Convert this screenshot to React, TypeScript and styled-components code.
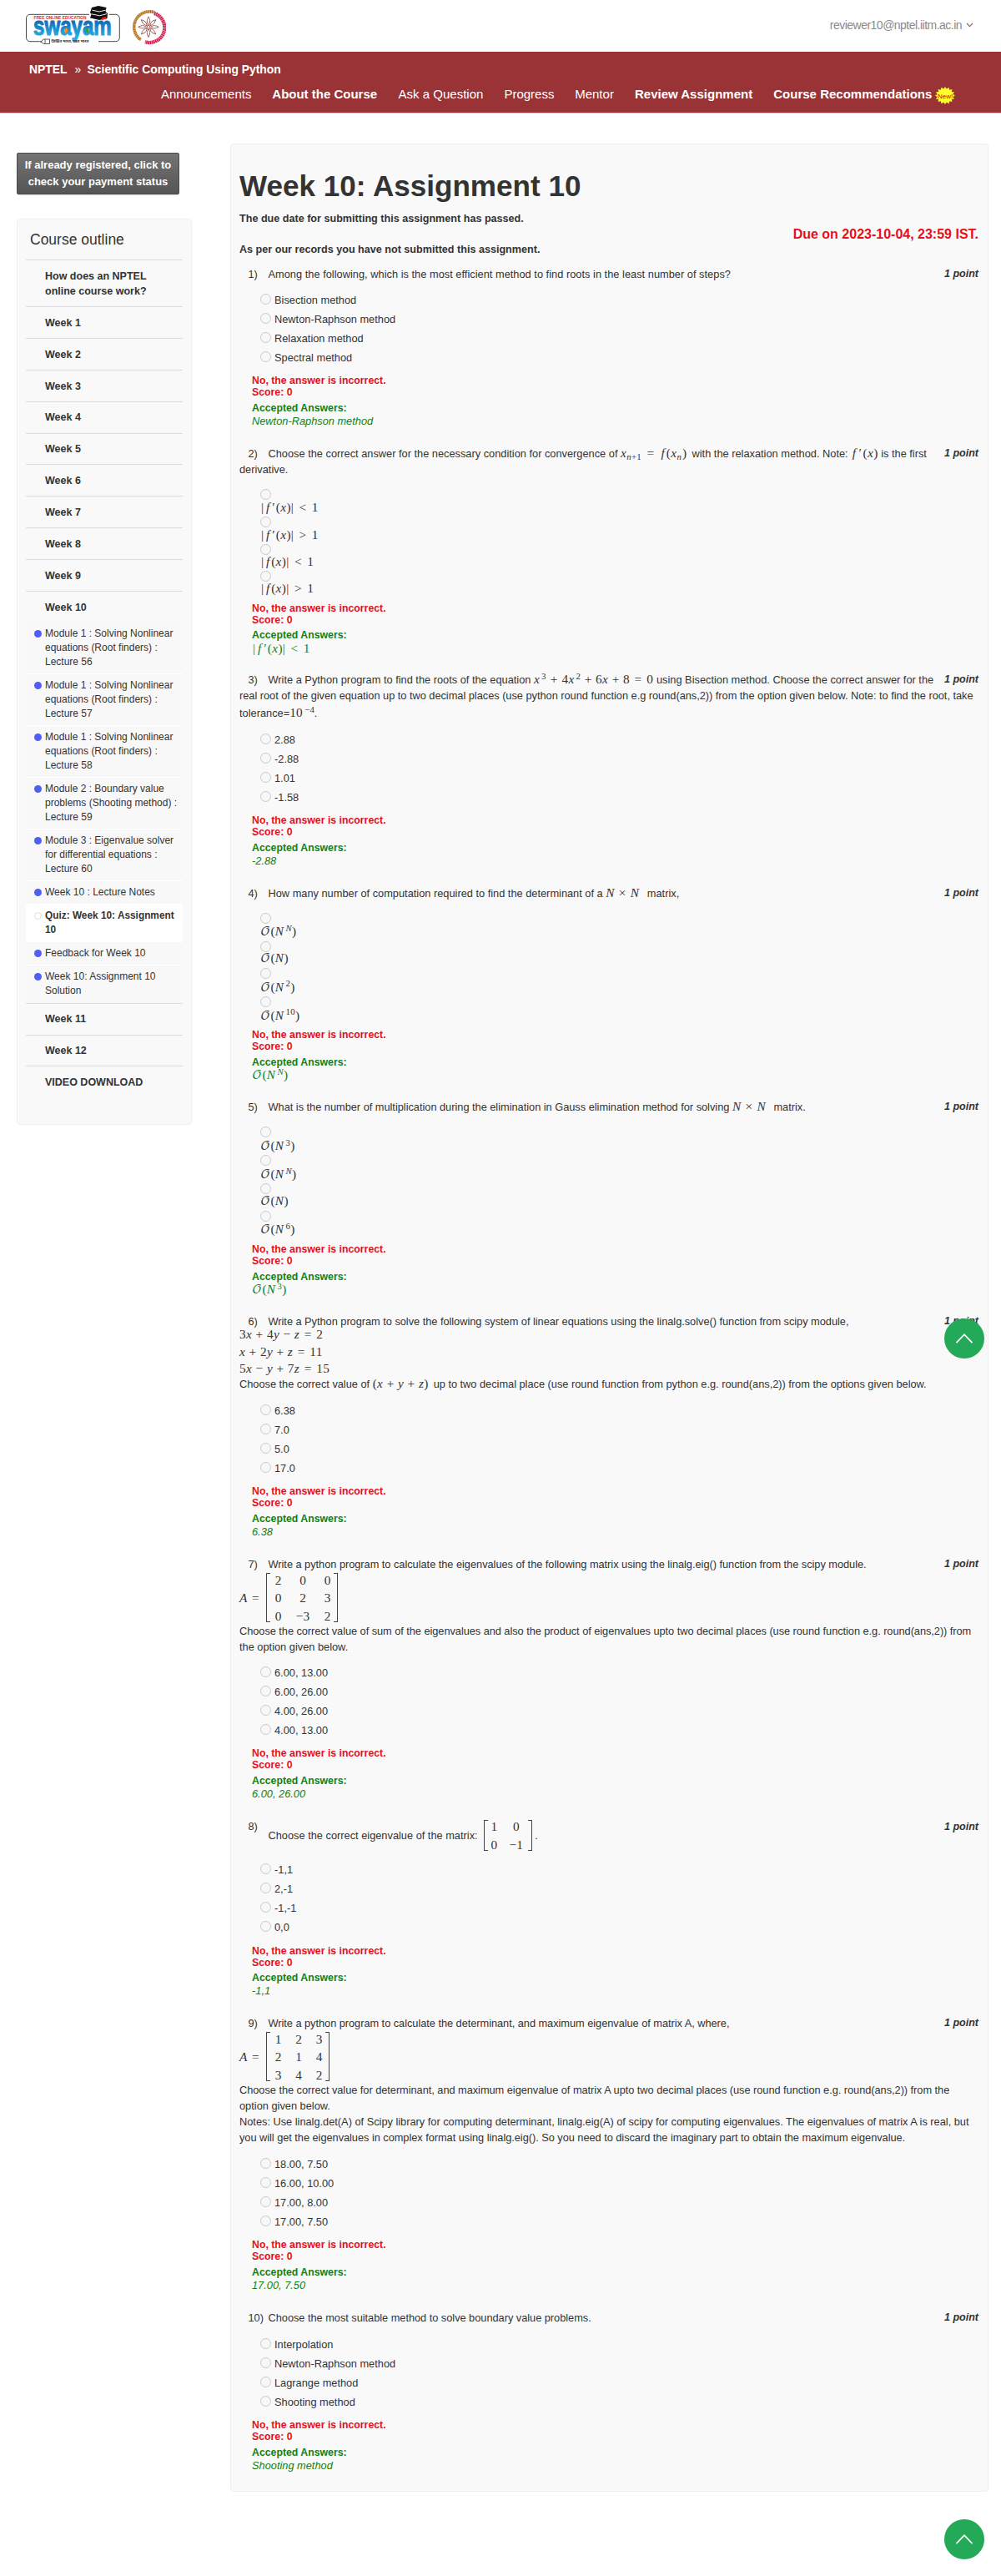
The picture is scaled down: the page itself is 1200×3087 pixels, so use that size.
import React from "react";
import styled, { createGlobalStyle, css } from "styled-components";

const sans = `"Liberation Sans", Arial, sans-serif`;
const serif = `"Liberation Serif", "DejaVu Math TeX Gyre", "DejaVu Serif", serif`;

const GlobalStyle = createGlobalStyle`
  *, *::before, *::after { box-sizing: border-box; }
  body { margin: 0; background: #fff; color: #333; font-family: ${sans}; font-size: 12.8px; }
  ul { list-style: none; margin: 0; padding: 0; }
  a { color: inherit; text-decoration: none; }
`;

const Page = styled.div`
  position: relative;
  width: 1200px;
  height: 3087px;
  overflow: hidden;
`;

/* ---------- header ---------- */
const TopBar = styled.header`
  display: flex;
  justify-content: space-between;
  height: 62px;
  padding: 0 33px 0 30px;
`;
const Logos = styled.div`
  display: flex;
  gap: 10px;
`;
const Account = styled.button`
  display: flex;
  align-items: center;
  gap: 5px;
  height: 60px;
  padding: 0;
  border: 0;
  background: none;
  color: #8a8a8a;
  font: 14px/1 ${sans};
  letter-spacing: -0.52px;
`;

const Banner = styled.div`
  height: 74px;
  background: #993335;
  border-bottom: 1px solid #d8cccc;
  color: #fff;
`;
const Crumbs = styled.div`
  display: flex;
  gap: 9px;
  padding: 10.500px 0 0 35px;
  height: 36px;
  font-weight: bold;
  font-size: 13.9px;
  line-height: 20px;
`;
const CrumbSep = styled.span`
  width: 6px;
  font-weight: normal;
`;
const Nav = styled.nav`
  display: flex;
  gap: 25.3px;
  padding-left: 193px;
  height: 30px;
  line-height: 30px;
  font-size: 15px;
  white-space: nowrap;
`;
const NavLink = styled.a<{ $bold?: boolean; $w: number }>`
  display: flex;
  width: ${(p) => p.$w}px;
  font-weight: ${(p) => (p.$bold ? "bold" : "normal")};
`;
const NewBadge = styled.svg`
  flex: none;
  margin: 6px 0 0 4px;
`;

/* ---------- columns ---------- */
const Columns = styled.div`
  display: flex;
  align-items: flex-start;
  padding-left: 20px;
`;
const Sidebar = styled.aside`
  width: 210px;
  margin: 47px 46px 0 0;
`;
const PayButton = styled.button`
  display: block;
  width: 195px;
  height: 50px;
  padding: 0 0 1px;
  border: 1px solid #4b4b4b;
  border-radius: 2px;
  background: linear-gradient(#747474, #555);
  color: #fff;
  font: bold 13px/20px ${sans};
  box-shadow: 0 1px 1px rgba(0, 0, 0, 0.15);
`;
const Outline = styled.section`
  height: 1086px;
  margin-top: 29px;
  padding: 0 10px;
  background: #f9f9f9;
  border: 1px solid #f0f0f0;
  border-radius: 4px;
`;
const OutlineTitle = styled.h2`
  margin: 0;
  height: 48px;
  padding-left: 5px;
  font-weight: normal;
  font-size: 17.5px;
  line-height: 49px;
`;
const Unit = styled.li`
  padding: 9.7px 0 8.75px 23px;
  border-top: 1px solid #dcdcdc;
  font-weight: bold;
  font-size: 12.5px;
  line-height: 18.4px;
`;
const Lesson = styled.li<{ $active?: boolean; $plain?: boolean }>`
  display: flex;
  padding: 5px 0;
  width: 188px;
  border-bottom: 1px solid ${(p) => (p.$plain ? "transparent" : "#fff")};
  background: ${(p) => (p.$active ? "#fff" : "#f8f8f8")};
  font-weight: ${(p) => (p.$active ? "bold" : "normal")};
  font-size: ${(p) => (p.$active ? "11.85px" : "12px")};
  line-height: 17px;
  white-space: nowrap;
`;
const Dot = styled.span<{ $hollow?: boolean }>`
  flex: none;
  width: 9px;
  height: 9px;
  margin: 4px 4px 0 10px;
  border-radius: 50%;
  background: #4f5ef7;
  ${(p) => p.$hollow && css`background: #fff; border: 1px solid #ddd;`}
`;

/* ---------- assignment ---------- */
const Panel = styled.main`
  width: 909px;
  height: 2814px;
  margin-top: 36px;
  padding-left: 10px;
  background: #f9f9f9;
  border: 1px solid #efefef;
  border-radius: 4px;
`;
const Title = styled.h1`
  margin: 0;
  padding-top: 30px;
  height: 80px;
  font-size: 35.1px;
  line-height: 40px;
`;
const Notices = styled.div`
  display: flex;
  justify-content: space-between;
  height: 65.5px;
  padding-right: 11px;
  font-weight: bold;
  font-size: 12.6px;
`;
const NoticeText = styled.div`
  line-height: 18.5px;
`;
const Due = styled.div`
  padding-top: 18px;
  font-size: 16px;
  line-height: 20px;
  color: #e60f1c;
`;
const QuestionBox = styled.section<{ $h: number }>`
  height: ${(p) => p.$h}px;
  white-space: nowrap;
`;
const Stem = styled.div<{ $h: number }>`
  display: flow-root;
  height: ${(p) => p.$h}px;
  padding-right: 11px;
`;
const Points = styled.em`
  float: right;
  font-weight: bold;
  font-size: 12.500px;
  line-height: 18px;
`;
const Line = styled.div<{ $h?: number; $mt?: number; $ls?: number }>`
  height: ${(p) => p.$h ?? 19}px;
  line-height: ${(p) => p.$h ?? 19}px;
  margin-top: ${(p) => p.$mt ?? 0}px;
  letter-spacing: ${(p) => p.$ls ?? 0}px;
`;
const Num = styled.span<{ $top?: boolean }>`
  display: inline-block;
  width: 24px;
  margin-left: 10.5px;
  letter-spacing: 0;
  ${(p) => p.$top && css`align-self: flex-start;`}
`;
const Row = styled.div<{ $h: number; $mt?: number }>`
  display: flex;
  align-items: center;
  height: ${(p) => p.$h}px;
  margin-top: ${(p) => p.$mt ?? 0}px;
`;
const Options = styled.ul`
  padding-left: 25px;
`;
const Option = styled.li`
  display: flex;
  gap: 4px;
  height: 22.95px;
  line-height: 22.5px;
`;
const Radio = styled.span`
  flex: none;
  display: block;
  width: 13px;
  height: 13px;
  margin-top: 3px;
  border: 1px solid #c9c9c9;
  border-radius: 50%;
  background: #f7f7f7;
`;
const MathOption = styled.li<{ $h: number }>`
  display: flow-root;
  height: ${(p) => p.$h}px;
`;
const MathText = styled.div<{ $mt: number }>`
  display: flex;
  margin-top: ${(p) => p.$mt}px;
`;
const Feedback = styled.div`
  padding: 8.3px 0 0 15px;
  line-height: 14px;
  font-weight: bold;
  font-size: 12.3px;
  color: #e60f1c;
`;
const Accepted = styled.div`
  margin-top: 4.6px;
  color: #138013;
`;
const Answer = styled.div`
  height: 18px;
  font-weight: normal;
  font-style: italic;
  font-size: 12.8px;
  line-height: 18px;
`;

/* ---------- maths ---------- */
const M = styled.span<{ $w?: number }>`
  display: inline-block;
  width: ${(p) => (p.$w ? `${p.$w}px` : "auto")};
  font: normal 15.3px/1 ${serif};
  letter-spacing: 0.35px;
  white-space: nowrap;
`;
const I = styled.i`
  font-style: italic;
`;
const Fn = styled.i`
  margin: 0 1.6px 0 1.5px;
  font-style: italic;
`;
const Script = styled.i`
  font-family: "DejaVu Math TeX Gyre", "Liberation Serif", serif;
  font-style: normal;
`;
const Op = styled.span<{ $m?: number }>`
  margin: 0 ${(p) => p.$m ?? 4.4}px;
`;
const Sup = styled.span`
  position: relative;
  top: -5.5px;
  margin-left: 2px;
  font-size: 10.8px;
  line-height: 0;
`;
const Sub = styled.span`
  position: relative;
  top: 2.5px;
  font-size: 10.8px;
  line-height: 0;
`;
const MatrixGrid = styled.span<{ $cols: string; $h: number; $w: number }>`
  position: relative;
  display: grid;
  grid-template-columns: ${(p) => p.$cols};
  grid-auto-rows: 21.8px;
  align-content: center;
  align-items: center;
  justify-items: center;
  width: ${(p) => p.$w}px;
  height: ${(p) => p.$h}px;
  padding: 0 3px;
  border-left: 1.4px solid #444;
  border-right: 1.4px solid #444;
  font: 15.3px/1 ${serif};
  &::before,
  &::after {
    content: "";
    position: absolute;
    top: 0;
    bottom: 0;
    width: 4px;
    border-top: 1px solid #444;
    border-bottom: 1px solid #444;
  }
  &::before { left: 0; }
  &::after { right: 0; }
`;
const Matrix = ({ rows, cols, h, w }: { rows: string[][]; cols: string; h: number; w: number }) => (
  <MatrixGrid $cols={cols} $h={h} $w={w}>
    {rows.flat().map((v, i) => (
      <span key={i}>{v}</span>
    ))}
  </MatrixGrid>
);

const Big = ({ p }: { p?: React.ReactNode }) => (
  <M>
    <Script>𝒪</Script>(<I>N</I>
    {p && <Sup>{p}</Sup>})
  </M>
);
const Abs = ({ prime, op }: { prime?: boolean; op: string }) => (
  <M>
    <Op $m={1}>|</Op><Fn>f</Fn>
    {prime && <Op $m={1}>′</Op>}(<I>x</I>)|<Op $m={6.3}>{op}</Op>1
  </M>
);
const NxN = () => (
  <M $w={46}>
    <I>N</I><Op $m={5}>×</Op><I>N</I>
  </M>
);

/* ---------- floating button ---------- */
const ToTop = styled.button<{ $y: number }>`
  position: absolute;
  left: 1132px;
  top: ${(p) => p.$y}px;
  display: grid;
  place-items: center;
  width: 48px;
  height: 48px;
  padding: 0;
  border: 0;
  border-radius: 50%;
  background: #23a957;
`;
const Up = ({ y }: { y: number }) => (
  <ToTop $y={y} aria-label="Back to top">
    <svg width="22" height="14" viewBox="0 0 22 14" fill="none" stroke="#fff" strokeWidth="1.7">
      <path d="M1.5 12.2 11 2.2l9.5 10" />
    </svg>
  </ToTop>
);

const SwayamLogo = () => (
  <svg width="117" height="60" viewBox="30 0 117 60">
    <defs>
      <linearGradient id="sw" x1="0" y1="0" x2="0" y2="1">
        <stop offset="0.25" stopColor="#0d5fae" />
        <stop offset="0.85" stopColor="#27aee4" />
      </linearGradient>
    </defs>
    <path d="M107 17.3H36a4.500 4.500 0 0 0-4.500 4.500v23.400a4.500 4.500 0 0 0 4.500 4.500H47M118 49.700h20.800a4.500 4.500 0 0 0 4.500-4.500V21.800a4.500 4.500 0 0 0-4.500-4.500h-8" fill="none" stroke="#333" strokeWidth="0.9" />
    <text x="40.500" y="22.800" fontFamily="Liberation Sans" fontWeight="bold" fontSize="4.900" fill="#e3222b">FREE ONLINE EDUCATION</text>
    <g transform="scale(1 1.33)">
      <text x="40" y="31.700" fontFamily="Liberation Sans" fontWeight="bold" fontSize="24.100" fill="url(#sw)" stroke="url(#sw)" strokeWidth="0.9">swayam</text>
    </g>
    <path d="M79.500 33c2 2 2.400 5 0 6.800-3-.8-3.400-4-0-6.800z" fill="#f28a21" />
    <path d="M105 33c2 2 2.400 5 0 6.800-3-.8-3.400-4-0-6.800z" fill="#2f9e44" />
    <path d="M110 9 118 7l9.500 2-1 5 2.500 2-.5 6-9.500 2-11-2.500 1.500-4.500-1.500-2z" fill="#111" />
    <path d="M110.500 12.200l8.500 1.800 7.500-1.800M109.500 16.800l10 2 8.500-2.200" fill="none" stroke="#fff" strokeWidth="0.9" />
    <path d="M121.500 21.500l6-2-.8 2 1 1.500-3.500.2-1.500 1.500z" fill="#e3222b" />
    <path d="M47.500 49.700h2.500v-1l2.500-1.700h7v5.500h-7l-2.500-1.700zM54 47v5.500" fill="#fff" stroke="#333" strokeWidth="0.8" />
    <text x="61.500" y="51.300" fontFamily="Noto Sans, sans-serif" fontWeight="bold" fontSize="4.500" fill="#333">शिक्षित भारत, उन्नत भारत</text>
  </svg>
);

const IitLogo = () => (
  <svg width="42" height="54" viewBox="-21 -32.300 42 54">
    <path d="M7-17.500A18.500 18.500 0 0 0-9 15.500" fill="none" stroke="#e3a24e" strokeWidth="3.600" />
    <path d="M7-17.500A18.500 18.500 0 0 0-9 15.500" fill="none" stroke="#7a5a33" strokeWidth="3.600" strokeDasharray="0.700 1.500" />
    <path d="M6.500-16.500A17.800 17.800 0 0 1-4 18" fill="none" stroke="#d3184b" strokeWidth="4.200" />
    <path d="M6.500-16.500A17.800 17.800 0 0 1-4 18" fill="none" stroke="#fff" strokeWidth="4.200" strokeDasharray="0.500 1.700" />
    <g fill="none" stroke="#8a4a4a" strokeWidth="0.900">
      {[0, 45, 90, 135, 180, 225, 270, 315].map((a) => (
        <path key={a} transform={`rotate(${a})`} d="M0-2.500c-2.600-4-1.800-6 0-9.700 1.800 3.700 2.600 5.700 0 9.700z" />
      ))}
    </g>
    <circle r="1.800" fill="#fff" stroke="#c0392b" strokeWidth="0.900" />
  </svg>
);

const starPoints = Array.from({ length: 32 }, (_, i) => {
  const a = (i / 32) * Math.PI * 2;
  const k = i % 2 ? 0.78 : 1;
  return `${12 + Math.cos(a) * 12 * k},${10.5 + Math.sin(a) * 10.5 * k}`;
}).join(" ");

const lessons = [
  ["Module 1 : Solving Nonlinear", "equations (Root finders) :", "Lecture 56"],
  ["Module 1 : Solving Nonlinear", "equations (Root finders) :", "Lecture 57"],
  ["Module 1 : Solving Nonlinear", "equations (Root finders) :", "Lecture 58"],
  ["Module 2 : Boundary value", "problems (Shooting method) :", "Lecture 59"],
  ["Module 3 : Eigenvalue solver", "for differential equations :", "Lecture 60"],
  ["Week 10 : Lecture Notes"],
  ["Quiz: Week 10: Assignment", "10"],
  ["Feedback for Week 10"],
  ["Week 10: Assignment 10", "Solution"],
];

const Broken = ({ lines }: { lines: string[] }) => (
  <span>
    {lines.map((l, i) => (
      <React.Fragment key={i}>
        {i > 0 && <br />}
        {l}
      </React.Fragment>
    ))}
  </span>
);

type Choice = string | { node: React.ReactNode; h: number; mt: number };
type Q = { h: number; stemH: number; stem: React.ReactNode; options: Choice[]; answer: React.ReactNode };

const big = (p?: React.ReactNode): Choice => ({ node: <Big p={p} />, h: p ? 34 : 32.4, mt: p ? 1.6 : -0.4 });
const abs = (op: string, prime?: boolean): Choice => ({ node: <Abs op={op} prime={prime} />, h: prime ? 33.05 : 32, mt: prime ? 0.6 : -0.4 });

const questions: Q[] = [
  {
    h: 215.9,
    stemH: 30.8,
    stem: <Line $ls={0.02}><Num>1)</Num>Among the following, which is the most efficient method to find roots in the least number of steps?</Line>,
    options: ["Bisection method", "Newton-Raphson method", "Relaxation method", "Spectral method"],
    answer: "Newton-Raphson method",
  },
  {
    h: 271.1,
    stemH: 48.9,
    stem: (
      <>
        <Line>
          <Num>2)</Num>Choose the correct answer for the necessary condition for convergence of{" "}
          <M $w={85.5}><I>x</I><Sub><I>n</I>+1</Sub><Op $m={6.5}>=</Op><Fn>f</Fn>(<I>x</I><Sub><I>n</I></Sub><Op $m={0.4} />)</M>
          with the relaxation method. Note: <M $w={36}><Fn>f</Fn><Op $m={1.5}>′</Op>(<I>x</I>)</M>is the first
        </Line>
        <Line>derivative.</Line>
      </>
    ),
    options: [abs("<", true), abs(">", true), abs("<"), abs(">")],
    answer: <Abs op="<" prime />,
  },
  {
    h: 256,
    stemH: 70.7,
    stem: (
      <>
        <Line>
          <Num>3)</Num>Write a Python program to find the roots of the equation{" "}
          <M $w={147}><I>x</I><Sup>3</Sup><Op $m={4.8}>+</Op>4<I>x</I><Sup>2</Sup><Op>+</Op>6<I>x</I><Op>+</Op>8<Op $m={5.6}>=</Op>0</M>
          using Bisection method. Choose the correct answer for the
        </Line>
        <Line $ls={-0.025}>real root of the given equation up to two decimal places (use python round function e.g round(ans,2)) from the option given below. Note: to find the root, take</Line>
        <Line $mt={1.7}>tolerance=<M $w={29.5}>10<Sup>−4</Sup></M>.</Line>
      </>
    ),
    options: ["2.88", "-2.88", "1.01", "-1.58"],
    answer: "-2.88",
  },
  {
    h: 255.8,
    stemH: 29.1,
    stem: <Line><Num>4)</Num>How many number of computation required to find the determinant of a <NxN /> matrix,</Line>,
    options: [big(<I>N</I>), big(), big("2"), big("10")],
    answer: <Big p={<I>N</I>} />,
  },
  {
    h: 257.2,
    stemH: 30.2,
    stem: <Line $ls={-0.02}><Num>5)</Num>What is the number of multiplication during the elimination in Gauss elimination method for solving <NxN /> matrix.</Line>,
    options: [big("3"), big(<I>N</I>), big(), big("6")],
    answer: <Big p="3" />,
  },
  {
    h: 291,
    stemH: 105.7,
    stem: (
      <>
        <Line $ls={-0.03}><Num>6)</Num>Write a Python program to solve the following system of linear equations using the linalg.solve() function from scipy module,</Line>
        <Line $h={20.4} $mt={-3}><M>3<I>x</I><Op>+</Op>4<I>y</I><Op>−</Op><I>z</I><Op $m={5.6}>=</Op>2</M></Line>
        <Line $h={20.4}><M><I>x</I><Op>+</Op>2<I>y</I><Op>+</Op><I>z</I><Op $m={5.6}>=</Op>11</M></Line>
        <Line $h={20.4}><M>5<I>x</I><Op>−</Op><I>y</I><Op>+</Op>7<I>z</I><Op $m={5.6}>=</Op>15</M></Line>
        <Line $mt={-2.3} $ls={-0.015}>
          Choose the correct value of <M $w={73}>(<I>x</I><Op $m={4.4}>+</Op><I>y</I><Op $m={4.4}>+</Op><I>z</I>)</M>up to two decimal place (use round function from python e.g. round(ans,2)) from the options given below.
        </Line>
      </>
    ),
    options: ["6.38", "7.0", "5.0", "17.0"],
    answer: "6.38",
  },
  {
    h: 314.3,
    stemH: 128.6,
    stem: (
      <>
        <Line $ls={-0.03}><Num>7)</Num>Write a python program to calculate the eigenvalues of the following matrix using the linalg.eig() function from the scipy module.</Line>
        <Row $h={61}>
          <M $w={32}><I>A</I><Op $m={5.3}>=</Op></M>
          <Matrix w={86} h={59} cols="21px 38px 21px" rows={[["2", "0", "0"], ["0", "2", "3"], ["0", "−3", "2"]]} />
        </Row>
        <Line $ls={-0.05}>Choose the correct value of sum of the eigenvalues and also the product of eigenvalues upto two decimal places (use round function e.g. round(ans,2)) from</Line>
        <Line>the option given below.</Line>
      </>
    ),
    options: ["6.00, 13.00", "6.00, 26.00", "4.00, 26.00", "4.00, 13.00"],
    answer: "6.00, 26.00",
  },
  {
    h: 235.7,
    stemH: 50.7,
    stem: (
      <Row $h={37} $mt={1.5}>
        <Num $top>8)</Num>
        Choose the correct eigenvalue of the matrix:&nbsp;&nbsp;
        <Matrix w={58} h={37} cols="17px 36px" rows={[["1", "0"], ["0", "−1"]]} />
        &nbsp;.
      </Row>
    ),
    options: ["-1,1", "2,-1", "-1,-1", "0,0"],
    answer: "-1,1",
  },
  {
    h: 353,
    stemH: 167.6,
    stem: (
      <>
        <Line $ls={-0.04}><Num>9)</Num>Write a python program to calculate the determinant, and maximum eigenvalue of matrix A, where,</Line>
        <Row $h={61}>
          <M $w={32}><I>A</I><Op $m={5.3}>=</Op></M>
          <Matrix w={76} h={59} cols="21px 28px 21px" rows={[["1", "2", "3"], ["2", "1", "4"], ["3", "4", "2"]]} />
        </Row>
        <Line $ls={-0.04}>Choose the correct value for determinant, and maximum eigenvalue of matrix A upto two decimal places (use round function e.g. round(ans,2)) from the</Line>
        <Line>option given below.</Line>
        <Line $ls={-0.01}>Notes: Use linalg.det(A) of Scipy library for computing determinant, linalg.eig(A) of scipy for computing eigenvalues. The eigenvalues of matrix A is real, but</Line>
        <Line $ls={-0.04}>you will get the eigenvalues in complex format using linalg.eig(). So you need to discard the imaginary part to obtain the maximum eigenvalue.</Line>
      </>
    ),
    options: ["18.00, 7.50", "16.00, 10.00", "17.00, 8.00", "17.00, 7.50"],
    answer: "17.00, 7.50",
  },
  {
    h: 217,
    stemH: 30.8,
    stem: <Line $ls={-0.03}><Num>10)</Num>Choose the most suitable method to solve boundary value problems.</Line>,
    options: ["Interpolation", "Newton-Raphson method", "Lagrange method", "Shooting method"],
    answer: "Shooting method",
  },
];

const Question = ({ q }: { q: Q }) => (
  <QuestionBox $h={q.h}>
    <Stem $h={q.stemH}>
      <Points>1 point</Points>
      {q.stem}
    </Stem>
    <Options>
      {q.options.map((o, i) =>
        typeof o === "string" ? (
          <Option key={i}><Radio />{o}</Option>
        ) : (
          <MathOption key={i} $h={o.h}>
            <Radio />
            <MathText $mt={o.mt}>{o.node}</MathText>
          </MathOption>
        )
      )}
    </Options>
    <Feedback>
      No, the answer is incorrect.
      <br />
      Score: 0
      <Accepted>
        Accepted Answers:
        <Answer>{typeof q.answer === "string" ? q.answer : <MathText $mt={0.5}>{q.answer}</MathText>}</Answer>
      </Accepted>
    </Feedback>
  </QuestionBox>
);

export default function App() {
  return (
    <Page>
      <GlobalStyle />
      <TopBar>
        <Logos>
          <SwayamLogo />
          <IitLogo />
        </Logos>
        <Account>
          reviewer10@nptel.iitm.ac.in
          <svg width="9" height="6" viewBox="0 0 9 6" fill="none" stroke="#777" strokeWidth="1.2"><path d="M1 1l3.500 3.600L8 1" /></svg>
        </Account>
      </TopBar>
      <Banner>
        <Crumbs><span>NPTEL</span><CrumbSep>»</CrumbSep><span>Scientific Computing Using Python</span></Crumbs>
        <Nav>
          <NavLink $w={108}>Announcements</NavLink>
          <NavLink $w={126} $bold>About the Course</NavLink>
          <NavLink $w={101.5}>Ask a Question</NavLink>
          <NavLink $w={59.5}>Progress</NavLink>
          <NavLink $w={46.5}>Mentor</NavLink>
          <NavLink $w={141} $bold>Review Assignment</NavLink>
          <NavLink $w={220} $bold>
            Course Recommendations
            <NewBadge width="24" height="21" viewBox="0 0 24 21">
              <polygon points={starPoints} fill="#ffff2e" />
              <text x="3" y="13.500" fontFamily="Liberation Sans" fontSize="8" fontWeight="normal" fill="#d40000">New!</text>
            </NewBadge>
          </NavLink>
        </Nav>
      </Banner>
      <Columns>
        <Sidebar>
          <PayButton>If already registered, click to<br />check your payment status</PayButton>
          <Outline>
            <OutlineTitle>Course outline</OutlineTitle>
            <ul>
              <Unit>How does an NPTEL<br />online course work?</Unit>
              {[1, 2, 3, 4, 5, 6, 7, 8, 9, 10].map((n) => (
                <Unit key={n}>Week {n}</Unit>
              ))}
              {lessons.map((l, i) => (
                <Lesson key={i} $active={i === 6} $plain={i === 8}>
                  <Dot $hollow={i === 6} />
                  <Broken lines={l} />
                </Lesson>
              ))}
              <Unit>Week 11</Unit>
              <Unit>Week 12</Unit>
              <Unit>VIDEO DOWNLOAD</Unit>
            </ul>
          </Outline>
        </Sidebar>
        <Panel>
          <Title>Week 10: Assignment 10</Title>
          <Notices>
            <NoticeText>
              The due date for submitting this assignment has passed.
              <br />
              <br />
              As per our records you have not submitted this assignment.
            </NoticeText>
            <Due>Due on 2023-10-04, 23:59 IST.</Due>
          </Notices>
          {questions.map((q, i) => (
            <Question key={i} q={q} />
          ))}
        </Panel>
      </Columns>
      <Up y={1580} />
      <Up y={3019} />
    </Page>
  );
}
